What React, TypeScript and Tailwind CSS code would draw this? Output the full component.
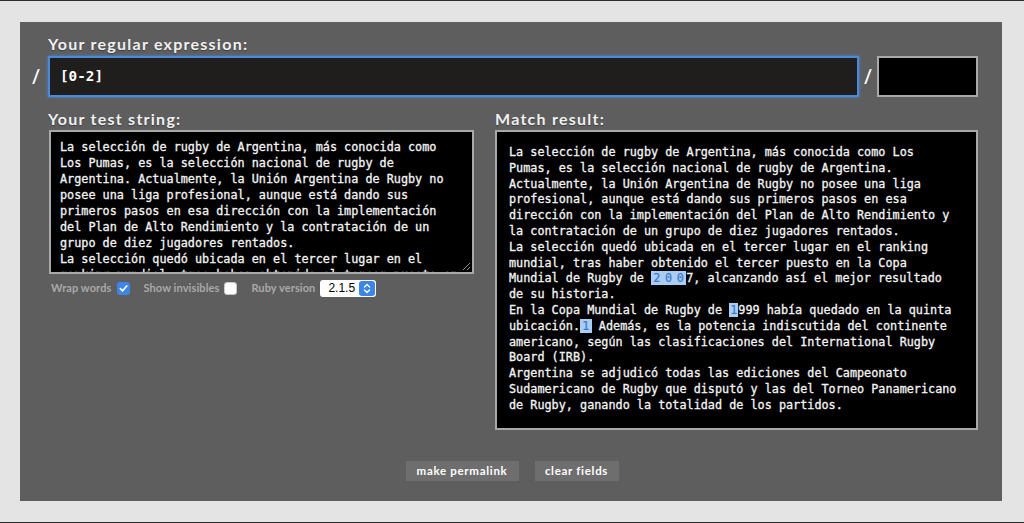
import React from "react";

const label = "font-['Lato','Liberation_Sans',sans-serif] font-bold text-[16px] tracking-[1.25px] leading-[20px] text-[#f1f1f1] [text-shadow:0_1px_1px_rgba(0,0,0,0.35)]";
const mono = "font-['DejaVu_Sans_Mono','Liberation_Mono',monospace] text-[11.8px] text-[#f4f4f4] whitespace-pre [-webkit-text-stroke:0.3px_#f4f4f4]";

const testLines = [
  "La selección de rugby de Argentina, más conocida como",
  "Los Pumas, es la selección nacional de rugby de",
  "Argentina. Actualmente, la Unión Argentina de Rugby no",
  "posee una liga profesional, aunque está dando sus",
  "primeros pasos en esa dirección con la implementación",
  "del Plan de Alto Rendimiento y la contratación de un",
  "grupo de diez jugadores rentados.",
  "La selección quedó ubicada en el tercer lugar en el",
  "ranking mundial, tras haber obtenido el tercer puesto en",
  "la Copa Mundial de Rugby de 2007, alcanzando así el",
];

function Hit({ children, wide }: { children: React.ReactNode; wide?: boolean }) {
  return (
    <span className={`bg-[#a9cdf4] text-[#3f78c6] [-webkit-text-stroke:0.2px_#3f78c6] ${wide ? "px-[2.3px]" : "px-[1px]"}`}>{children}</span>
  );
}

function Check({ on }: { on: boolean }) {
  return on ? (
    <span className="w-[13px] h-[13px] shrink-0 rounded-[3px] bg-[#3d86e8] flex items-center justify-center">
      <svg width="9" height="9" viewBox="0 0 10 10">
        <path d="M1.5 5.2 L4 7.6 L8.6 2.2" stroke="white" strokeWidth="1.8" fill="none" strokeLinecap="round" strokeLinejoin="round" />
      </svg>
    </span>
  ) : (
    <span className="block w-[13px] h-[13px] shrink-0 rounded-[3px] bg-white border border-[#c8c8c8]" />
  );
}

export default function App() {
  return (
    <div className="w-[1024px] h-[523px] bg-[#e4e4e4] border-t border-b border-[#2b2b2b] pt-[21px] pl-[20px] overflow-hidden">
      <div className="w-[982px] h-[479px] bg-[#5e5e5e] pt-[12px] flex flex-col">
        <div className={`${label} pl-[28px]`}>Your regular expression:</div>

        <div className="flex items-center pl-[6px] mt-[2px]">
          <span className="w-[20px] text-center text-white text-[18px] font-['Lato',sans-serif] font-bold">/</span>
          <div className="w-[811px] h-[41px] ml-[2px] bg-[#201d1d] border-2 border-[#4a8ad9] shadow-[0_0_3px_#4a8ad9] flex items-center pl-[10px]">
            <span className="font-['DejaVu_Sans_Mono',monospace] font-bold text-[14.3px] text-white">[0-2]</span>
          </div>
          <span className="w-[18px] text-center text-white text-[18px] font-['Lato',sans-serif] font-bold">/</span>
          <div className="w-[101px] h-[41px] bg-black border-2 border-[#a9a9a9]" />
        </div>

        <div className="flex pl-[29px] mt-[12px] gap-[21px]">
          <div className="w-[425px] flex flex-col">
            <div className={`${label} -ml-[1px]`}>Your test string:</div>
            <div className="relative mt-[1px] h-[144px] bg-black border-2 border-[#a9a9a9] overflow-hidden pl-[9px] pt-[7px]">
              <div className={`${mono} leading-[16px]`}>{testLines.join("\n")}</div>
              <svg className="absolute right-[1px] bottom-[1px]" width="10" height="10" viewBox="0 0 10 10">
                <path d="M9 2 L2 9 M9 6 L6 9" stroke="#8a8a8a" strokeWidth="1" />
              </svg>
            </div>
            <div className="flex items-center mt-[4px] h-[20px] pl-[2px] font-['Lato','Liberation_Sans',sans-serif] font-bold text-[11px] tracking-[0.1px] text-[#a9a9a9] whitespace-nowrap">
              <span>Wrap words</span>
              <span className="ml-[6px]"><Check on /></span>
              <span className="ml-[13px]">Show invisibles</span>
              <span className="ml-[5px]"><Check on={false} /></span>
              <span className="ml-[14px]">Ruby version</span>
              <div className="ml-[5px] w-[56px] h-[17px] bg-white rounded-[3px] flex items-center overflow-hidden">
                <span className="flex-1 pl-[8px] font-['Liberation_Sans',sans-serif] font-normal tracking-normal text-[12px] text-black">2.1.5</span>
                <span className="w-[16px] h-[15px] mr-[1px] bg-[#3d86e8] rounded-[3px] flex items-center justify-center">
                  <svg width="8" height="11" viewBox="0 0 8 11">
                    <path d="M1.5 4 L4 1.5 L6.5 4 M1.5 7 L4 9.5 L6.5 7" stroke="white" strokeWidth="1.4" fill="none" strokeLinecap="round" strokeLinejoin="round" />
                  </svg>
                </span>
              </div>
            </div>
          </div>

          <div className="w-[483px] flex flex-col">
            <div className={label}>Match result:</div>
            <div className={`mt-[1px] h-[300px] bg-black border-2 border-[#a9a9a9] pl-[12px] pt-[13px] ${mono} leading-[15.8px]`}>
              {"La selección de rugby de Argentina, más conocida como Los\n"}
              {"Pumas, es la selección nacional de rugby de Argentina.\n"}
              {"Actualmente, la Unión Argentina de Rugby no posee una liga\n"}
              {"profesional, aunque está dando sus primeros pasos en esa\n"}
              {"dirección con la implementación del Plan de Alto Rendimiento y\n"}
              {"la contratación de un grupo de diez jugadores rentados.\n"}
              {"La selección quedó ubicada en el tercer lugar en el ranking\n"}
              {"mundial, tras haber obtenido el tercer puesto en la Copa\n"}
              {"Mundial de Rugby de "}<Hit wide>2</Hit><Hit wide>0</Hit><Hit wide>0</Hit>{"7, alcanzando así el mejor resultado\n"}
              {"de su historia.\n"}
              {"En la Copa Mundial de Rugby de "}<Hit>1</Hit>{"999 había quedado en la quinta\n"}
              {"ubicación."}<Hit wide>1</Hit>{" Además, es la potencia indiscutida del continente\n"}
              {"americano, según las clasificaciones del International Rugby\n"}
              {"Board (IRB).\n"}
              {"Argentina se adjudicó todas las ediciones del Campeonato\n"}
              {"Sudamericano de Rugby que disputó y las del Torneo Panamericano\n"}
              {"de Rugby, ganando la totalidad de los partidos."}
            </div>
          </div>
        </div>

        <div className="flex justify-center gap-[16px] mt-[31px] pl-[2px] font-['Lato','Liberation_Sans',sans-serif] font-bold text-[11.5px] tracking-[0.7px] text-white">
          <button className="w-[113px] h-[20px] bg-[#6e6e6e] leading-[20px]">make permalink</button>
          <button className="w-[84px] h-[20px] bg-[#6e6e6e] leading-[20px]">clear fields</button>
        </div>
      </div>
    </div>
  );
}
